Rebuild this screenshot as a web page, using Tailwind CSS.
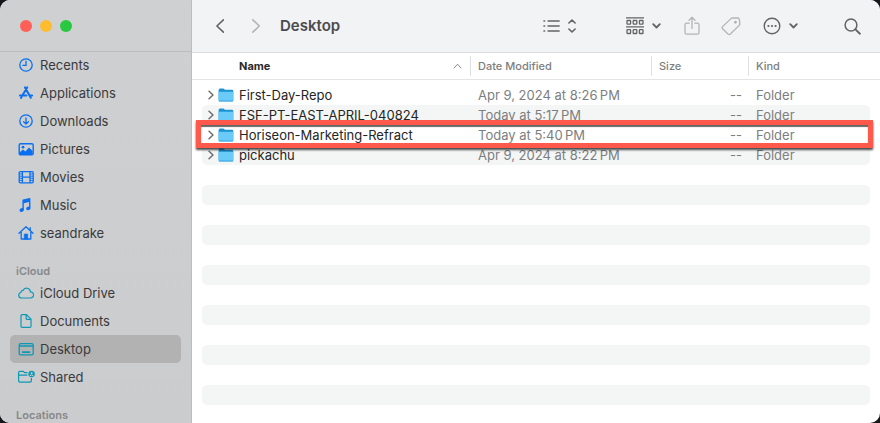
<!DOCTYPE html>
<html lang="en">
<head>
<meta charset="utf-8">
<meta name="viewport" content="width=device-width, initial-scale=1">
<title>Desktop</title>
<script src="https://cdn.jsdelivr.net/npm/@tailwindcss/browser@4"></script>
</head>
<body class="bg-[#17161a] font-['Inter','Liberation_Sans',sans-serif] text-[13px] leading-5">
<svg class="hidden" aria-hidden="true">
  <symbol id="folder" viewBox="0 0 16 14">
    <path d="M.6 2.2Q.6.6 2 .6H5.2Q5.8.6 6.4 1.2L7 1.7H14Q15.3 1.7 15.3 3V12H.6Z" fill="#1e93d2"/>
    <path d="M.6 3.8H15.3V12.2Q15.3 13.4 14 13.4H2Q.6 13.4.6 12.2Z" fill="#6bcbf8"/>
    <path d="M.6 12.4H15.3Q15.3 13.6 14 13.6H2Q.6 13.6.6 12.4Z" fill="#3ba6df"/>
  </symbol>
  <symbol id="disclose" viewBox="0 0 8 10"><path d="M2 1.2L6 5L2 8.8" fill="none" stroke="#6b6b6b" stroke-width="1.4" stroke-linecap="round" stroke-linejoin="round"/></symbol>
  <symbol id="down" viewBox="0 0 9 6"><path d="M1.2 1.2L4.5 4.5L7.8 1.2" fill="none" stroke="currentColor" stroke-width="1.8" stroke-linecap="round" stroke-linejoin="round"/></symbol>
</svg>

<div class="flex min-h-screen overflow-hidden rounded-[10px] bg-white">
  <aside class="flex w-48 shrink-0 flex-col border-r border-[#bcbdbf] bg-linear-to-b from-[#cfd0d2] to-[#cbccce] text-[#3a3a3b]">
    <div class="flex h-[52px] shrink-0 items-center gap-2 border-b border-[#bbbcbe] pl-5">
      <button aria-label="Close" class="size-3 rounded-full bg-[#ff5f57]"></button>
      <button aria-label="Minimize" class="size-3 rounded-full bg-[#febc2e]"></button>
      <button aria-label="Zoom" class="size-3 rounded-full bg-[#28c840]"></button>
    </div>
    <nav class="-mt-px px-[10px]">
      <ul class="text-[#0a6ff0]">
        <li><a href="#" class="flex h-7 items-center gap-[6px] pl-2">
          <svg class="size-4" viewBox="0 0 16 16" fill="none" stroke="currentColor" stroke-width="1.3" stroke-linecap="round"><circle cx="8" cy="8" r="6.2"/><path d="M8 4.2V8.3H4.8"/></svg><span class="text-[#3a3a3b]">Recents</span></a></li>
        <li><a href="#" class="flex h-7 items-center gap-[6px] pl-2">
          <svg class="size-4" viewBox="0 0 16 16" fill="none" stroke="currentColor" stroke-width="2" stroke-linecap="round"><path d="M9.2 2.4L4.8 9.8M7 2.4L12.8 12.8M1.9 10.4H8.4M11.8 10.4H14.1M3.5 12.2L3 13"/></svg><span class="text-[#3a3a3b]">Applications</span></a></li>
        <li><a href="#" class="flex h-7 items-center gap-[6px] pl-2">
          <svg class="size-4" viewBox="0 0 16 16" fill="none" stroke="currentColor" stroke-width="1.3" stroke-linecap="round" stroke-linejoin="round"><circle cx="8" cy="8" r="6.2"/><path d="M8 4.8V11M5.6 8.8L8 11.1L10.4 8.8"/></svg><span class="text-[#3a3a3b]">Downloads</span></a></li>
        <li><a href="#" class="flex h-7 items-center gap-[6px] pl-2">
          <svg class="size-4" viewBox="0 0 16 16"><rect x="1.2" y="2.8" width="14" height="11" rx="1.4" fill="none" stroke="currentColor" stroke-width="1.4"/><path d="M1.8 11.2L5 8.6L7.4 10.4L11 6.6L14.6 10V13H1.8Z" fill="currentColor"/><circle cx="5" cy="6.2" r="1.4" fill="currentColor"/></svg><span class="text-[#3a3a3b]">Pictures</span></a></li>
        <li><a href="#" class="flex h-7 items-center gap-[6px] pl-2">
          <svg class="size-4" viewBox="0 0 16 16" fill="none" stroke="currentColor" stroke-width="1.3"><rect x="1.2" y="2.6" width="14" height="11.2" rx="1"/><path d="M4.4 2.6V13.8M12 2.6V13.8M4.4 8.2H12"/><path d="M1.2 5H4.4M1.2 7.2H4.4M1.2 9.3H4.4M1.2 11.4H4.4M12 5H15.2M12 7.2H15.2M12 9.3H15.2M12 11.4H15.2" stroke-width=".9"/></svg><span class="text-[#3a3a3b]">Movies</span></a></li>
        <li><a href="#" class="flex h-7 items-center gap-[6px] pl-2">
          <svg class="size-4" viewBox="0 0 16 16" fill="currentColor"><path d="M4.4 3.4Q4.4 2.8 5 2.6L11.6 1.1Q12.4 1 12.4 1.8V11.2H11V5.1L5.8 6.3V13.2H4.4Z"/><ellipse cx="3.7" cy="13" rx="2.2" ry="1.8" transform="rotate(-18 3.7 13)"/><ellipse cx="10.3" cy="11.4" rx="2.2" ry="1.8" transform="rotate(-18 10.3 11.4)"/></svg><span class="text-[#3a3a3b]">Music</span></a></li>
        <li><a href="#" class="flex h-7 items-center gap-[6px] pl-2">
          <svg class="size-4" viewBox="0 0 16 16" fill="none" stroke="currentColor" stroke-width="1.3" stroke-linecap="round" stroke-linejoin="round"><path d="M1 8.2L8 1.8L15 8.2M3.2 7V14H12.8V7M12.2 2.6V5"/><path d="M6.3 14V9H9.7V14Z" fill="currentColor" stroke-width=".6"/></svg><span class="text-[#3a3a3b]">seandrake</span></a></li>
      </ul>
      <h2 class="flex h-8 items-end pl-[6px] text-[11px] font-semibold leading-4 text-[#87888a]">iCloud</h2>
      <ul class="text-[#0d98b4]">
        <li><a href="#" class="flex h-7 items-center gap-[6px] pl-2">
          <svg class="size-4" viewBox="0 0 16 16" fill="none" stroke="currentColor" stroke-width="1.2"><path d="M3.6 13A2.8 2.8 0 0 1 2.8 7.5A2.3 2.3 0 0 1 5 5.4A3.9 3.9 0 0 1 12.4 6.8A3.1 3.1 0 0 1 12.6 13Z"/></svg><span class="text-[#3a3a3b]">iCloud Drive</span></a></li>
        <li><a href="#" class="flex h-7 items-center gap-[6px] pl-2">
          <svg class="size-4" viewBox="0 0 16 16" fill="none" stroke="currentColor" stroke-width="1.2" stroke-linejoin="round"><path d="M4.4 1.6H8.4L13 6.2V13.2Q13 14.4 11.8 14.4H4.2Q3 14.4 3 13.2V2.8Q3 1.6 4.4 1.6ZM8.2 1.8V5.4Q8.2 6.4 9.2 6.4H12.8"/></svg><span class="text-[#3a3a3b]">Documents</span></a></li>
        <li><a href="#" aria-current="page" class="flex h-7 items-center gap-[6px] rounded-[5px] bg-[#b2b2b3] pl-2">
          <svg class="size-4" viewBox="0 0 16 16" fill="none" stroke="currentColor" stroke-width="1.3"><rect x="1.2" y="2.6" width="14" height="11.2" rx="1.4"/><path d="M1.2 5H15.2"/><path d="M4 11.2H12.2" stroke-width="1.8"/></svg><span class="text-[#3a3a3b]">Desktop</span></a></li>
        <li><a href="#" class="flex h-7 items-center gap-[6px] pl-2">
          <svg class="size-4 overflow-visible" viewBox="0 0 16 16" fill="none" stroke="currentColor" stroke-width="1.2" stroke-linejoin="round"><path d="M9.6 3.6H6.6L5.4 2.4H2Q.6 2.4.6 3.8V11.8Q.6 13.2 2 13.2H12Q13.4 13.2 13.4 11.8V9M.6 6.2H9.4"/><circle cx="13.6" cy="5" r="3.2" fill="currentColor" stroke="none"/><circle cx="13.6" cy="4.2" r="1" fill="#cfcfd0" stroke="none"/><path d="M11.8 6.9Q13.6 4.9 15.4 6.9" stroke="#cfcfd0" stroke-width="1"/></svg><span class="text-[#3a3a3b]">Shared</span></a></li>
      </ul>
      <h2 class="flex h-8 items-end pl-[6px] text-[11px] font-semibold leading-4 text-[#87888a]">Locations</h2>
    </nav>
  </aside>

  <main class="min-w-0 flex-1">
    <header class="flex h-[53px] items-center border-b border-[#dcdddf] bg-[#f2f3f5] pl-6 pr-[19px] text-[#636466]">
      <button aria-label="Back"><svg class="h-4 w-2" viewBox="0 0 8 16" fill="none" stroke="currentColor" stroke-width="1.6" stroke-linecap="round" stroke-linejoin="round"><path d="M7.4 1.8L.9 8L7.4 14.2"/></svg></button>
      <button aria-label="Forward" disabled class="ml-7 text-[#b3b4b6]"><svg class="h-4 w-2" viewBox="0 0 8 16" fill="none" stroke="currentColor" stroke-width="1.6" stroke-linecap="round" stroke-linejoin="round"><path d="M.8 1.8L7.3 8L.8 14.2"/></svg></button>
      <h1 class="ml-5 text-[15px] font-semibold text-[#4a4b4c]">Desktop</h1>
      <div class="ml-auto flex items-center">
        <button aria-label="View as list" class="flex items-center gap-2">
          <svg class="h-4 w-[17px]" viewBox="0 0 17 16" stroke="currentColor" stroke-width="1.3" stroke-linecap="round"><path d="M5 3H16.2M5 8H16.2M5 13H16.2"/><path d="M1 3H1.6M1 8H1.6M1 13H1.6" stroke-width="1.6"/></svg>
          <svg class="h-4 w-2" viewBox="0 0 8 16" fill="none" stroke="currentColor" stroke-width="1.6" stroke-linecap="round" stroke-linejoin="round"><path d="M.9 5L4 2L7.1 5M.9 11L4 14L7.1 11"/></svg>
        </button>
        <button aria-label="Group" class="ml-[50px] flex items-center gap-2">
          <svg class="h-[18px] w-[18px]" viewBox="0 0 18 18" fill="none" stroke="currentColor" stroke-width="1.3"><path d="M0 .8H18M0 9.9H18"/><rect x="1" y="3.5" width="3.6" height="3.6" rx=".6"/><rect x="7.2" y="3.5" width="3.6" height="3.6" rx=".6"/><rect x="13.4" y="3.5" width="3.6" height="3.6" rx=".6"/><rect x="1" y="12.7" width="3.6" height="3.8" rx=".6"/><rect x="7.2" y="12.7" width="3.6" height="3.8" rx=".6"/><rect x="13.4" y="12.7" width="3.6" height="3.8" rx=".6"/></svg>
          <svg class="h-[6px] w-[9px]"><use href="#down"/></svg>
        </button>
        <button aria-label="Share" disabled class="ml-[22px] text-[#b3b4b6]"><svg class="h-5 w-[18px]" viewBox="0 0 18 20" fill="none" stroke="currentColor" stroke-width="1.3" stroke-linecap="round" stroke-linejoin="round"><path d="M6.2 7.2H3.6Q2 7.2 2 8.8V16.6Q2 18.2 3.6 18.2H14.4Q16 18.2 16 16.6V8.8Q16 7.2 14.4 7.2H11.8M9 12.4V1.4M6 4.2L9 1.2L12 4.2"/></svg></button>
        <button aria-label="Tags" disabled class="ml-5 text-[#b3b4b6]"><svg class="size-5" viewBox="0 0 20 20" fill="none" stroke="currentColor" stroke-width="1.3" stroke-linejoin="round"><path d="M11.6 2H16.6Q18.2 2 18.4 3.6L18.8 8Q18.8 8.8 18.2 9.4L9.4 18Q8.2 19 7 18L1.6 12.8Q.6 11.6 1.6 10.6L10 2.6Q10.8 2 11.6 2Z"/><circle cx="14.4" cy="6.2" r=".8" fill="currentColor"/></svg></button>
        <button aria-label="More actions" class="ml-[22px] flex items-center gap-2">
          <svg class="size-[18px]" viewBox="0 0 18 18"><circle cx="9" cy="9" r="7.8" fill="none" stroke="currentColor" stroke-width="1.4"/><g fill="currentColor"><circle cx="5.4" cy="9" r="1.1"/><circle cx="9" cy="9" r="1.1"/><circle cx="12.6" cy="9" r="1.1"/></g></svg>
          <svg class="h-[6px] w-[9px]"><use href="#down"/></svg>
        </button>
        <button aria-label="Search" class="ml-[46px]"><svg class="size-[17px]" viewBox="0 0 17 17" fill="none" stroke="currentColor" stroke-width="1.5" stroke-linecap="round"><circle cx="7" cy="7" r="5.9"/><path d="M11.4 11.4L15.9 15.7" stroke-width="1.9"/></svg></button>
      </div>
    </header>

    <table class="w-full table-fixed border-separate border-spacing-0 text-left text-[#7d7e7f]">
      <colgroup><col class="w-[10px]"><col><col class="w-[181px]"><col class="w-[97px]"><col class="w-[122px]"><col class="w-[10px]"></colgroup>
      <thead class="text-[11px]">
        <tr class="h-[27px]">
          <td class="border-b border-[#e3e4e5]"></td>
          <th scope="col" aria-sort="ascending" class="border-b border-[#e3e4e5] p-0 font-bold text-[#2b2b2c]"><div class="flex h-5 items-center justify-between pl-[37px] pr-2">Name<svg class="h-[6px] w-[9px]" viewBox="0 0 9 6" fill="none" stroke="#858687" stroke-linecap="round" stroke-linejoin="round"><path d="M1 5L4.5 1.2L8 5"/></svg></div></th>
          <th scope="col" class="border-b border-[#e3e4e5] p-0 font-medium"><div class="h-5 border-l border-[#dedfe0] pl-[7px]">Date Modified</div></th>
          <th scope="col" class="border-b border-[#e3e4e5] p-0 font-medium"><div class="h-5 border-l border-[#dedfe0] pl-[7px]">Size</div></th>
          <th scope="col" class="border-b border-[#e3e4e5] p-0 font-medium"><div class="h-5 border-l border-[#dedfe0] pl-[7px]">Kind</div></th>
          <td class="border-b border-[#e3e4e5]"></td>
        </tr>
      </thead>
      <tbody class="whitespace-nowrap [&_td]:p-0">
        <tr class="h-[5px]" aria-hidden="true"><td colspan="6"></td></tr>
        <tr class="h-5">
          <td></td>
          <td><div class="flex items-center pl-[5px] text-[#252526]"><button aria-label="Expand First-Day-Repo"><svg class="h-[10px] w-2"><use href="#disclose"/></svg></button><svg class="mr-[5px] ml-[3px] h-[14px] w-4"><use href="#folder"/></svg>First-Day-Repo</div></td>
          <td><div class="pl-2">Apr 9, 2024 at 8:26&#8239;PM</div></td><td><div class="pr-[6px] text-right">--</div></td><td><div class="pl-2">Folder</div></td>
          <td></td>
        </tr>
        <tr class="h-5">
          <td></td>
          <td class="rounded-l-[5px] bg-[#f4f5f5]"><div class="flex items-center pl-[5px] text-[#252526]"><button aria-label="Expand FSF-PT-EAST-APRIL-040824"><svg class="h-[10px] w-2"><use href="#disclose"/></svg></button><svg class="mr-[5px] ml-[3px] h-[14px] w-4"><use href="#folder"/></svg>FSF-PT-EAST-APRIL-040824</div></td>
          <td class="bg-[#f4f5f5]"><div class="pl-2">Today at 5:17&#8239;PM</div></td><td class="bg-[#f4f5f5]"><div class="pr-[6px] text-right">--</div></td><td class="rounded-r-[5px] bg-[#f4f5f5]"><div class="pl-2">Folder</div></td>
          <td></td>
        </tr>
        <tr class="relative h-5">
          <td><div class="pointer-events-none absolute -top-[5px] right-[7px] left-1 z-10 h-7 border-[5px] border-[#ff594b] shadow-[0_2px_2px_0px_rgba(0,0,0,0.7),inset_0_2px_1px_rgba(0,0,0,0.6)]"></div></td>
          <td><div class="flex items-center pl-[5px] text-[#252526]"><button aria-label="Expand Horiseon-Marketing-Refract"><svg class="h-[10px] w-2"><use href="#disclose"/></svg></button><svg class="mr-[5px] ml-[3px] h-[14px] w-4"><use href="#folder"/></svg>Horiseon-Marketing-Refract</div></td>
          <td><div class="pl-2">Today at 5:40&#8239;PM</div></td><td><div class="pr-[6px] text-right">--</div></td><td><div class="pl-2">Folder</div></td>
          <td></td>
        </tr>
        <tr class="h-5">
          <td></td>
          <td class="rounded-l-[5px] bg-[#f4f5f5]"><div class="flex items-center pl-[5px] text-[#252526]"><button aria-label="Expand pickachu"><svg class="h-[10px] w-2"><use href="#disclose"/></svg></button><svg class="mr-[5px] ml-[3px] h-[14px] w-4"><use href="#folder"/></svg>pickachu</div></td>
          <td class="bg-[#f4f5f5]"><div class="pl-2">Apr 9, 2024 at 8:22&#8239;PM</div></td><td class="bg-[#f4f5f5]"><div class="pr-[6px] text-right">--</div></td><td class="rounded-r-[5px] bg-[#f4f5f5]"><div class="pl-2">Folder</div></td>
          <td></td>
        </tr>
      </tbody>
    </table>
    <div class="mt-5 flex flex-col gap-5 px-[10px]" aria-hidden="true">
      <div class="h-5 rounded-[5px] bg-[#f4f5f5]"></div>
      <div class="h-5 rounded-[5px] bg-[#f4f5f5]"></div>
      <div class="h-5 rounded-[5px] bg-[#f4f5f5]"></div>
      <div class="h-5 rounded-[5px] bg-[#f4f5f5]"></div>
      <div class="h-5 rounded-[5px] bg-[#f4f5f5]"></div>
      <div class="h-5 rounded-[5px] bg-[#f4f5f5]"></div>
    </div>
  </main>
</div>
</body>
</html>
